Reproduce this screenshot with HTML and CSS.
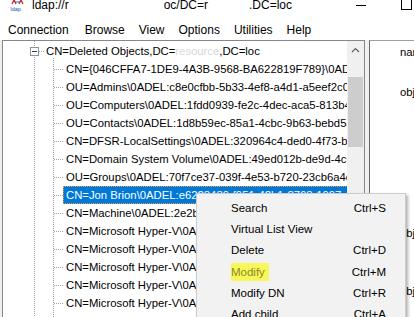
FILE: index.html
```html
<!DOCTYPE html>
<html lang="en">
<head>
    <meta charset="UTF-8">
    <meta name="viewport" content="width=device-width, initial-scale=1.0">
    <title>Ldp</title>
    <link rel="stylesheet" href="styles.css">
</head>
<body>

<div class="window">
    <!-- Title bar -->
    <div class="titlebar">
        <svg class="app-icon" width="16" height="13" viewBox="0 0 16 13">
            <path d="M2 5 L4 1 L6 5 M4 1 L4 0" stroke="#d02020" stroke-width="1.2" fill="none"/>
            <path d="M9 5 L11 1 L13 5 M11 1 L11 0" stroke="#d02020" stroke-width="1.2" fill="none"/>
            <path d="M5 3 L10 3" stroke="#2060c0" stroke-width="1" fill="none"/>
            <text x="0.5" y="12" font-size="5.5" font-family="Liberation Sans, sans-serif" fill="#2050b0">ldap</text>
        </svg>
        <span class="title">ldap://r</span>
        <span class="title title-mid">oc/DC=r</span>
        <span class="title title-end">.DC=loc</span>
        <span class="btn-min"></span>
        <span class="btn-max"></span>
    </div>

    <!-- Menu bar -->
    <div class="menubar">
        <span>Connection</span>
        <span>Browse</span>
        <span>View</span>
        <span>Options</span>
        <span>Utilities</span>
        <span>Help</span>
    </div>

    <div class="panes">
        <!-- Tree -->
        <div class="tree">
            <div class="tree-body">
                <div class="node root">
                    <span class="expander"></span>
                    <span class="hline short"></span>
                    <span class="label">CN=Deleted Objects,DC=<span class="smudge">resource</span>,DC=loc</span>
                </div>
                <div class="children">
                    <div class="node"><span class="hline"></span><span class="label">CN={046CFFA7-1DE9-4A3B-9568-BA622819F789}\0ADEL:3a61f0c2-8d47-4b1e-9a02-5c7e</span></div>
                    <div class="node"><span class="hline"></span><span class="label">OU=Admins\0ADEL:c8e0cfbb-5b33-4ef8-a4d1-a5eef2c0917d</span></div>
                    <div class="node"><span class="hline"></span><span class="label">OU=Computers\0ADEL:1fdd0939-fe2c-4dec-aca5-813b47d2e6a0</span></div>
                    <div class="node"><span class="hline"></span><span class="label">OU=Contacts\0ADEL:1d8b59ec-85a1-4cbc-9b63-bebd5a07f1c2</span></div>
                    <div class="node"><span class="hline"></span><span class="label">CN=DFSR-LocalSettings\0ADEL:320964c4-ded0-4f73-b8a1-2c</span></div>
                    <div class="node"><span class="hline"></span><span class="label">CN=Domain System Volume\0ADEL:49ed012b-de9d-4c6e-91ab</span></div>
                    <div class="node"><span class="hline"></span><span class="label">OU=Groups\0ADEL:70f7ce37-039f-4e53-b720-23cb6a4d81e5</span></div>
                    <div class="node selected"><span class="hline"></span><span class="label">CN=Jon Brion\0ADEL:e6223439-f951-42b1-8763-1997c4e2a0b8</span></div>
                    <div class="node"><span class="hline"></span><span class="label">CN=Machine\0ADEL:2e2b81c4-6d0a-4f15-b3e2-7a9c10d4e8f6</span></div>
                    <div class="node"><span class="hline"></span><span class="label">CN=Microsoft Hyper-V\0ADEL:0b71e3a2-9c4d-4e8a-b6f1-33d2</span></div>
                    <div class="node"><span class="hline"></span><span class="label">CN=Microsoft Hyper-V\0ADEL:5d20c8f7-1a3e-4b9c-8e02-f4a1</span></div>
                    <div class="node"><span class="hline"></span><span class="label">CN=Microsoft Hyper-V\0ADEL:8a4f6e13-2b7d-4c05-9f3a-61e8</span></div>
                    <div class="node"><span class="hline"></span><span class="label">CN=Microsoft Hyper-V\0ADEL:c3e9a0d5-7f12-4a6b-8d4c-0b97</span></div>
                    <div class="node"><span class="hline"></span><span class="label">CN=Microsoft Hyper-V\0ADEL:f17b2c84-5e9a-4d3f-a0c6-8e25</span></div>
                    <div class="node"><span class="hline"></span><span class="label">CN=Microsoft Hyper-V\0ADEL:29d6b5f0-3c8e-41a7-b2d9-7f04</span></div>
                </div>
            </div>
            <div class="vscroll">
                <div class="arrow-up">
                    <svg width="9" height="6" viewBox="0 0 9 6"><path d="M1 5 L4.5 1.5 L8 5" stroke="#606060" stroke-width="1.2" fill="none"/></svg>
                </div>
                <div class="thumb"></div>
            </div>
        </div>

        <!-- Details -->
        <div class="detail">
            <div class="attr first">name</div>
            <div class="attr second">objectClass</div>
            <div class="attr third">objectGUID</div>
            <div class="attr fourth">objectSid</div>
        </div>
    </div>

    <!-- Context menu -->
    <div class="ctx-menu">
        <div class="item"><span>Search</span><span class="key">Ctrl+S</span></div>
        <div class="item"><span>Virtual List View</span><span class="key"></span></div>
        <div class="item"><span>Delete</span><span class="key">Ctrl+D</span></div>
        <div class="item"><span class="marked">Modify</span><span class="key">Ctrl+M</span></div>
        <div class="item"><span>Modify DN</span><span class="key">Ctrl+R</span></div>
        <div class="item"><span>Add child</span><span class="key">Ctrl+A</span></div>
    </div>
</div>

</body>
</html>
```

FILE: styles.css
```css
body {
    margin: 0;
    padding: 0;
    background-color: #f0f0f0;
    font-family: "Liberation Sans", Arial, sans-serif;
    font-size: 11.3px;
    color: #000;
    overflow: hidden;
}
.window {
    position: relative;
    width: 414px;
    height: 317px;
    overflow: hidden;
}

/* title bar */
.titlebar {
    display: flex;
    align-items: flex-start;
    height: 19px;
    background-color: #fff;
    font-size: 12px;
    line-height: 12px;
}
.app-icon {
    margin-left: 10px;
    margin-top: -1px;
}
.title {
    margin-left: 6px;
    margin-top: -1px;
}
.title-mid {
    margin-left: 95px;
}
.title-end {
    margin-left: 41px;
}
.btn-min {
    width: 10px;
    height: 1px;
    background-color: #000;
    margin-left: 64px;
    margin-top: 5px;
}
.btn-max {
    width: 9px;
    height: 10px;
    border: 1px solid #000;
    margin-left: 35px;
    margin-top: -2px;
}

/* menu bar */
.menubar {
    display: flex;
    height: 19px;
    line-height: 19px;
    padding-top: 2px;
    background-color: #fff;
    font-size: 12px;
    padding-left: 8px;
}
.menubar span {
    margin-right: 14px;
}
.menubar span:first-child {
    margin-right: 16px;
}

/* panes */
.panes {
    display: flex;
    padding-left: 2px;
    gap: 4px;
    height: 277px;
}
.tree {
    display: flex;
    width: 361px;
    border: 1px solid #828790;
    border-bottom: none;
    background-color: #fff;
}
.tree-body {
    flex: 1;
    overflow: hidden;
    padding-top: 1px;
    background-image: repeating-linear-gradient(to bottom, #a0a0a0 0 1px, transparent 1px 2px);
    background-size: 1px 100%;
    background-position: 31px 0;
    background-repeat: no-repeat;
}
.node {
    display: flex;
    align-items: center;
    height: 18px;
    line-height: 18px;
    white-space: nowrap;
}
.root {
    padding-left: 27px;
}
.expander {
    position: relative;
    flex: none;
    width: 7px;
    height: 7px;
    border: 1px solid #919191;
    background-color: #fff;
}
.expander::after {
    content: "";
    position: absolute;
    left: 1px;
    top: 3px;
    width: 5px;
    height: 1px;
    background-color: #1f3f7f;
}
.hline {
    flex: none;
    width: 9px;
    height: 0;
    border-top: 1px dotted #a0a0a0;
}
.hline.short {
    width: 5px;
}
.label {
    padding: 0 3px;
}
.root .label {
    padding-left: 2px;
}
.smudge {
    color: #d8d8d8;
}
.children {
    margin-top: -2px;
    padding-top: 2px;
    padding-left: 51px;
    background-image: repeating-linear-gradient(to bottom, #a0a0a0 0 1px, transparent 1px 2px);
    background-size: 1px 100%;
    background-position: 50px 0;
    background-repeat: no-repeat;
}
.selected .label {
    background-color: #0078d7;
    color: #fff;
    outline: 1px dotted #f0a040;
    outline-offset: -1px;
}

/* scrollbar */
.vscroll {
    flex: none;
    width: 17px;
    background-color: #f0f0f0;
}
.arrow-up {
    height: 17px;
    display: flex;
    align-items: center;
    justify-content: center;
}
.thumb {
    margin: 19px 1px 0 1px;
    height: 70px;
    background-color: #cdcdcd;
}

/* details pane */
.detail {
    flex: 1;
    background-color: #fff;
    border-left: 1px solid #696969;
    border-top: 1px solid #a0a0a0;
    padding-left: 30px;
    line-height: 18px;
    white-space: nowrap;
}
.attr.first {
    margin-top: 2px;
}
.attr.second {
    margin-top: 22px;
}
.attr.third {
    margin-top: 123px;
}
.attr.fourth {
    margin-top: 40px;
}

/* context menu */
.ctx-menu {
    position: absolute;
    left: 196px;
    top: 193px;
    width: 210px;
    box-sizing: border-box;
    padding-top: 3px;
    background-color: #f2f2f2;
    border: 1px solid #cccccc;
    box-shadow: 2px 2px 3px rgba(0, 0, 0, 0.3);
    font-size: 11.5px;
}
.item {
    display: flex;
    justify-content: space-between;
    align-items: center;
    height: 21.3px;
    padding: 0 19px 0 34px;
}
.marked {
    background-color: #f7f75c;
    color: #8a8a1c;
    line-height: 18px;
    padding-right: 4px;
}
```
